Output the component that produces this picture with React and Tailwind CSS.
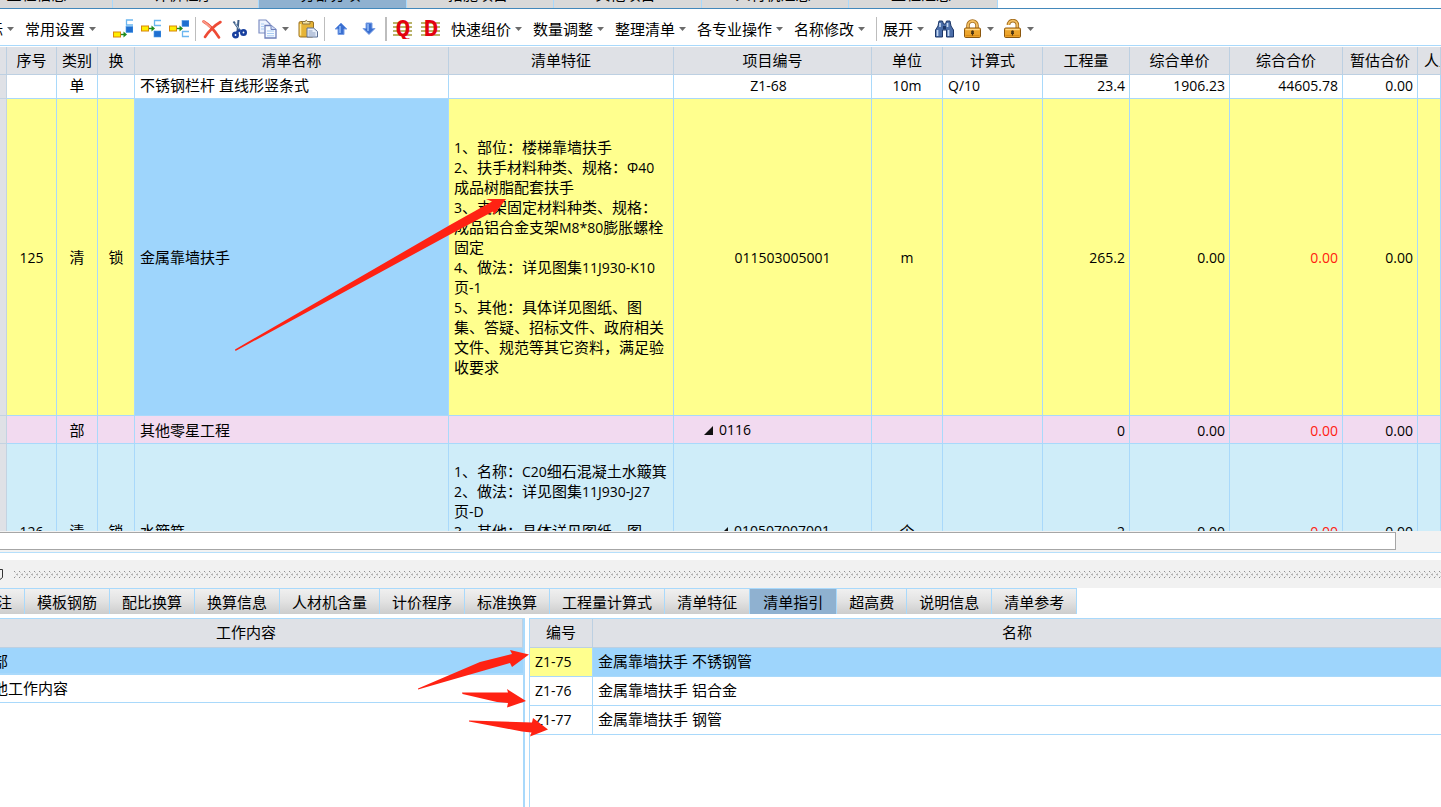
import clsx from 'clsx';

const TOP_TABS = [
  { label: '工程信息', width: 'w-[148px]' },
  { label: '计价程序', width: 'w-[146px]' },
  { label: '分部分项', width: 'w-[148px]', active: true },
  { label: '措施项目', width: 'w-[147px]' },
  { label: '其他项目', width: 'w-[148px]' },
  { label: '人材机汇总', width: 'w-[147px]' },
  { label: '工程汇总', width: 'w-[149px]' },
];

const BOTTOM_TABS = [
  '备注',
  '模板钢筋',
  '配比换算',
  '换算信息',
  '人材机含量',
  '计价程序',
  '标准换算',
  '工程量计算式',
  '清单特征',
  '清单指引',
  '超高费',
  '说明信息',
  '清单参考',
];

const COLUMNS = [
  { key: 'gutter', label: '', width: 'w-[7px]' },
  { key: 'no', label: '序号', width: 'w-[50px]', align: 'text-center' },
  { key: 'type', label: '类别', width: 'w-[41px]', align: 'text-center' },
  { key: 'lock', label: '换', width: 'w-[37px]', align: 'text-center' },
  { key: 'name', label: '清单名称', width: 'w-[314px]', align: 'text-left' },
  { key: 'feature', label: '清单特征', width: 'w-[225px]', align: 'text-left' },
  { key: 'code', label: '项目编号', width: 'w-[198px]', align: 'text-center' },
  { key: 'unit', label: '单位', width: 'w-[71px]', align: 'text-center' },
  { key: 'formula', label: '计算式', width: 'w-[100px]', align: 'text-left' },
  { key: 'qty', label: '工程量', width: 'w-[87px]', align: 'text-right' },
  { key: 'price', label: '综合单价', width: 'w-[100px]', align: 'text-right' },
  { key: 'total', label: '综合合价', width: 'w-[113px]', align: 'text-right' },
  { key: 'estimate', label: '暂估合价', width: 'w-[75px]', align: 'text-right' },
  { key: 'labor', label: '人工费', width: '', align: 'text-left' },
];

const ROWS = [
  {
    id: 'z1-68',
    height: 'h-6 align-top',
    bg: 'bg-white',
    type: '单',
    name: '不锈钢栏杆 直线形竖条式',
    code: 'Z1-68',
    indent: 'pr-2',
    unit: '10m',
    formula: 'Q/10',
    qty: '23.4',
    price: '1906.23',
    total: '44605.78',
    estimate: '0.00',
  },
  {
    id: '125',
    height: 'h-[317px]',
    bg: 'bg-[#ffff8e]',
    no: '125',
    type: '清',
    lock: '锁',
    name: '金属靠墙扶手',
    selected: true,
    feature: [
      '1、部位：楼梯靠墙扶手',
      '2、扶手材料种类、规格：Φ40',
      '成品树脂配套扶手',
      '3、支架固定材料种类、规格：',
      '成品铝合金支架M8*80膨胀螺栓',
      '固定',
      '4、做法：详见图集11J930-K10',
      '页-1',
      '5、其他：具体详见图纸、图',
      '集、答疑、招标文件、政府相关',
      '文件、规范等其它资料，满足验',
      '收要求',
    ],
    code: '011503005001',
    indent: 'pl-5',
    unit: 'm',
    qty: '265.2',
    price: '0.00',
    total: '0.00',
    warn: true,
    estimate: '0.00',
  },
  {
    id: '0116',
    height: 'h-7',
    bg: 'bg-[#f2daf0]',
    type: '部',
    name: '其他零星工程',
    code: '0116',
    indent: 'pr-[90px]',
    expanded: true,
    qty: '0',
    price: '0.00',
    total: '0.00',
    warn: true,
    estimate: '0.00',
  },
  {
    id: '126',
    height: 'h-[174px]',
    bg: 'bg-[#cfedf9]',
    no: '126',
    type: '清',
    lock: '锁',
    name: '水簸箕',
    feature: [
      '1、名称：C20细石混凝土水簸箕',
      '2、做法：详见图集11J930-J27',
      '页-D',
      '3、其他：具体详见图纸、图',
      '集、答疑、招标文件、政府相关',
      '文件、规范等其它资料，满足验',
      '收要求',
    ],
    code: '010507007001',
    indent: 'pl-1',
    expanded: true,
    unit: '个',
    qty: '2',
    price: '0.00',
    total: '0.00',
    warn: true,
    estimate: '0.00',
  },
];

const GUIDE_ROWS = [
  { code: 'Z1-75', name: '金属靠墙扶手 不锈钢管', selected: true },
  { code: 'Z1-76', name: '金属靠墙扶手 铝合金' },
  { code: 'Z1-77', name: '金属靠墙扶手 钢管' },
];

const TAB_GRADIENT = 'bg-linear-to-b from-[#f0f0f0] via-[#e2e2e2] to-[#cdcdcd]';

// Latin runs are set one size smaller than the Chinese text around them.
function Mixed({ text }) {
  return text.split(/([\x21-\x7eΦ]+)/).map((part, i) =>
    i % 2 ? (
      <span key={i} className="text-sm leading-none">
        {part}
      </span>
    ) : (
      part
    )
  );
}

function Caret() {
  return (
    <svg width="7" height="4" viewBox="0 0 7 4" className="shrink-0" aria-hidden="true">
      <path d="M0 0h7L3.5 4z" fill="#6b6b6b" />
    </svg>
  );
}

function MenuButton({ label, className }) {
  return (
    <button
      type="button"
      className={clsx('flex shrink-0 items-center gap-1 pr-[7px] pl-1 whitespace-nowrap', className)}
    >
      {label}
      <Caret />
    </button>
  );
}

function CaretButton({ label }) {
  return (
    <button type="button" aria-label={label} className="flex h-5 shrink-0 items-center pr-[5px]">
      <Caret />
    </button>
  );
}

function IconButton({ label, children }) {
  return (
    <button type="button" aria-label={label} className="mx-1 size-5 shrink-0">
      <svg width="20" height="20" viewBox="0 0 20 20" aria-hidden="true">
        {children}
      </svg>
    </button>
  );
}

function Separator({ wide = false }) {
  return <div className={clsx('mx-0.5 h-6 shrink-0 bg-[#bdbdbd]', wide ? 'w-0.5' : 'w-px')} />;
}

function YellowArrow({ y }) {
  return (
    <>
      <rect x="0.5" y={y - 2.5} width="7" height="5" fill="#ffee00" stroke="#d8860b" />
      <path d={`M8 ${y}h4`} stroke="#1c8a1c" strokeWidth="1.4" />
      <path d={`M10.5 ${y - 3}L14 ${y}l-3.500 3z`} fill="#1c8a1c" />
    </>
  );
}

function BlueBlock({ y }) {
  return <rect x="13" y={y} width="7" height="6" fill="#1f6fd0" stroke="#4d9be8" strokeWidth="0.6" />;
}

function OpenBlock({ y }) {
  return <path d={`M20 ${y + 0.5}h-6.500v5h6.500`} fill="#fff" stroke="#6bb6f0" strokeWidth="1.3" />;
}

function LockBody() {
  return (
    <>
      <rect x="1.500" y="9" width="16" height="9.500" rx="1.200" fill="#eda52c" stroke="#8a560f" />
      <path d="M2.500 10.500h14" stroke="#ffd787" strokeWidth="1.400" />
      <path d="M2.500 16.500h14" stroke="#d98b17" strokeWidth="1.200" />
      <circle cx="9.500" cy="12.700" r="1.500" fill="#4a3413" />
      <path d="M9.500 13v3.500M8 14.500h3" stroke="#4a3413" strokeWidth="1.200" />
    </>
  );
}

function LetterIcon({ letter }) {
  return (
    <>
      <path d="M0 4h19M0 8h19M0 12h19M0 16h19" stroke="#a39a3a" strokeWidth="1.300" />
      <text
        x="10"
        y="17"
        textAnchor="middle"
        fontFamily="Liberation Mono, monospace"
        fontWeight="700"
        fontSize="24"
        fill="#e3000f"
      >
        {letter}
      </text>
    </>
  );
}

function Toolbar() {
  return (
    <div className="flex h-[37px] shrink-0 items-center overflow-hidden border-b border-[#a9d9fb] bg-white pt-1">
      <MenuButton label="目标" className="-ml-[31px]" />
      <MenuButton label="常用设置" />
      <div className="w-1.5 shrink-0" />
      <IconButton label="插入前">
        <OpenBlock y={0.5} />
        <BlueBlock y={7.5} />
        <YellowArrow y={15.5} />
      </IconButton>
      <IconButton label="插入中">
        <OpenBlock y={1} />
        <BlueBlock y={12} />
        <YellowArrow y={9.5} />
      </IconButton>
      <IconButton label="插入后">
        <BlueBlock y={1.5} />
        <OpenBlock y={12} />
        <YellowArrow y={9.5} />
      </IconButton>
      <Separator />
      <IconButton label="删除">
        <path
          d="M1.500 2.500C6 5 13 12 17 18.500M18.500 3C13 6 6 13 3 18"
          fill="none"
          stroke="#ee4a35"
          strokeWidth="2.600"
          strokeLinecap="round"
        />
        <path d="M1.500 2.500C4 4 6 6 8 8" stroke="#f99a88" strokeWidth="2" strokeLinecap="round" />
      </IconButton>
      <IconButton label="剪切">
        <path d="M3.500 2.500l6.500 9M8.500 1L7.500 12" stroke="#3f5f88" strokeWidth="2" />
        <path d="M5 4l4.500 6.500" stroke="#c9dcf0" strokeWidth="0.800" />
        <circle cx="5.500" cy="16" r="2.200" fill="none" stroke="#183f9e" strokeWidth="2.600" />
        <circle cx="13.500" cy="13.500" r="2.200" fill="none" stroke="#183f9e" strokeWidth="2.600" />
        <path d="M6.500 13.500l4-2.500" stroke="#183f9e" strokeWidth="2.400" />
      </IconButton>
      <IconButton label="复制">
        <path d="M1 1h7l4 4v9H1z" fill="#eef3fd" stroke="#7f8fc4" strokeWidth="1.200" />
        <path d="M7 6.500h6l5 4v8.500H7z" fill="#f6faff" stroke="#6f80bb" strokeWidth="1.300" />
        <path d="M13 6.500v4h5" fill="#cfdcf5" stroke="#6f80bb" />
        <path d="M9 12h7M9 14.500h7M9 16.800h7M3 5h3M3 7.500h3M3 10h3" stroke="#a8cbf3" />
      </IconButton>
      <CaretButton label="复制选项" />
      <IconButton label="粘贴">
        <rect x="1" y="2.500" width="14.500" height="15.500" rx="1.500" fill="#e6b437" stroke="#9a7121" />
        <path d="M2.500 5v11.500" stroke="#ffe89a" strokeWidth="1.500" />
        <path d="M4.500 5V2.500h2.500Q8.300 0 9.500 2.500H12V5z" fill="#f2e3a4" stroke="#8d7440" />
        <path d="M9 9h6.500l4 3.500V18H9z" fill="#e8effa" stroke="#5b6f94" />
        <path d="M10.500 12h4M10.500 14h7M10.500 16h7" stroke="#8d9fc1" />
      </IconButton>
      <Separator />
      <IconButton label="上移">
        <path d="M10 4l6 6h-3v5.500H7V10H4z" fill="#3a6fd0" stroke="#7ba0e6" />
        <path d="M9 7v7" stroke="#94bdf8" strokeWidth="1.500" />
      </IconButton>
      <IconButton label="下移">
        <path d="M10 15.500l-6-6h3V4h6v5.500h3z" fill="#3a6fd0" stroke="#7ba0e6" />
        <path d="M9 5v7" stroke="#94bdf8" strokeWidth="1.500" />
      </IconButton>
      <Separator wide />
      <IconButton label="清单库">
        <LetterIcon letter="Q" />
      </IconButton>
      <IconButton label="定额库">
        <LetterIcon letter="D" />
      </IconButton>
      <div className="flex shrink-0 px-0.5">
        <MenuButton label="快速组价" />
        <MenuButton label="数量调整" />
        <MenuButton label="整理清单" />
        <MenuButton label="各专业操作" />
        <MenuButton label="名称修改" />
      </div>
      <Separator />
      <MenuButton label="展开" />
      <IconButton label="查找">
        <path
          d="M4 2h3.500l1 3h2l1-3H15l1 5 2.500 4v7h-7v-7h-4v7h-7v-7L3 7z"
          fill="#4b6ea9"
          stroke="#1d3768"
        />
        <path d="M2.500 11v6M13.500 11v6M5 4v4M12.500 4v4" stroke="#c5d9f3" strokeWidth="1.700" />
        <path d="M8 7h3v3H8z" fill="#1d3768" />
      </IconButton>
      <IconButton label="锁定">
        <path d="M5 10V6.500a4.500 4.500 0 0 1 9 0V10" fill="none" stroke="#a8701f" strokeWidth="3.600" />
        <path d="M5 10V6.500a4.500 4.500 0 0 1 9 0V10" fill="none" stroke="#f3c064" strokeWidth="1.800" />
        <LockBody />
      </IconButton>
      <CaretButton label="锁定选项" />
      <IconButton label="解锁">
        <path d="M5.500 6a4.300 4.300 0 0 1 8.800 0V10" fill="none" stroke="#a8701f" strokeWidth="3.600" />
        <path d="M5.500 6a4.300 4.300 0 0 1 8.800 0V10" fill="none" stroke="#f3c064" strokeWidth="1.800" />
        <LockBody />
      </IconButton>
      <CaretButton label="解锁选项" />
    </div>
  );
}

function Cell({ col, row }) {
  if (col.key === 'gutter') {
    return <td className="border-r border-b border-[#c3d3e2] bg-[#dfe1e6] p-0" />;
  }
  const value = row[col.key];
  return (
    <td
      className={clsx(
        'overflow-hidden border-r border-b border-[#a9d9fb] py-0 whitespace-nowrap',
        col.align,
        col.align === 'text-left' && 'pl-[5px]',
        col.align === 'text-right' && 'pr-1',
        col.key === 'code' && row.indent,
        row.selected && col.key === 'name' ? 'bg-[#9ed5fc]' : row.bg,
        row.warn && col.key === 'total' && 'text-[#ff2010]'
      )}
    >
      {col.key === 'feature' && value ? (
        value.map((line) => (
          <div key={line}>
            <Mixed text={line} />
          </div>
        ))
      ) : col.key === 'code' && row.expanded ? (
        <button type="button" className="inline-flex items-center gap-1.5">
          <svg width="9" height="9" viewBox="0 0 9 9" aria-hidden="true">
            <path d="M9 0v9H0z" fill="#111" />
          </svg>
          <span className="text-sm leading-5">{value}</span>
        </button>
      ) : (
        value && <Mixed text={value} />
      )}
    </td>
  );
}

function BillTable() {
  return (
    <div className="min-h-0 flex-1 overflow-hidden pt-px">
      <table className="w-full table-fixed border-separate border-spacing-0 leading-5">
        <thead>
          <tr className="h-7">
            {COLUMNS.map((col) => (
              <th
                key={col.key}
                className={clsx(
                  'overflow-hidden border-r border-b border-[#bdd0e2] bg-[#dfe1e6] px-0 pt-0 pb-0.5 font-normal whitespace-nowrap',
                  col.width,
                  !col.width && 'pl-[6px] text-left'
                )}
              >
                {col.label}
              </th>
            ))}
          </tr>
        </thead>
        <tbody>
          {ROWS.map((row) => (
            <tr key={row.id} className={row.height}>
              {COLUMNS.map((col) => (
                <Cell key={col.key} col={col} row={row} />
              ))}
            </tr>
          ))}
        </tbody>
      </table>
    </div>
  );
}

function Splitter() {
  return (
    <div className="flex h-7 shrink-0 items-center gap-[11px] bg-[#f1f1f1]">
      <svg width="3" height="11" viewBox="0 0 3 11" aria-hidden="true">
        <path d="M0 .5h2.500v8L0 10.500" fill="none" stroke="#333" />
      </svg>
      <svg width="100%" height="7" className="min-w-0 flex-1" aria-hidden="true">
        <defs>
          <pattern id="grip" width="5" height="7" patternUnits="userSpaceOnUse">
            <rect width="1" height="1" fill="#8f8f8f" />
            <rect x="1" y="1" width="1" height="1" fill="#d0d0d0" />
            <rect x="2" y="3" width="2" height="1" fill="#b0b0b0" />
            <rect x="3" y="2" width="1" height="1" fill="#d0d0d0" />
            <rect x="3" y="4" width="1" height="1" fill="#d0d0d0" />
            <rect y="6" width="1" height="1" fill="#8f8f8f" />
            <rect x="1" y="5" width="1" height="1" fill="#d0d0d0" />
          </pattern>
        </defs>
        <rect width="100%" height="7" fill="url(#grip)" />
      </svg>
    </div>
  );
}

function DetailPanel() {
  return (
    <div className="flex min-h-0 flex-1">
      <div className="w-[525px] shrink-0 overflow-hidden border-t border-r-2 border-[#a9d9fb]">
        <div className="-ml-[30px]">
          <table className="w-full border-separate border-spacing-0 leading-5">
            <thead>
              <tr className="h-[29px]">
                <th className="border-r border-b border-[#bdd0e2] bg-[#dfe1e6] px-0 pt-0 pb-0.5 font-normal">
                  工作内容
                </th>
              </tr>
            </thead>
            <tbody>
              <tr className="h-[27px]">
                <td className="border-b-2 border-[#a9d9fb] bg-[#9ed5fc] py-0 pl-2">全部</td>
              </tr>
              <tr className="h-7">
                <td className="border-b border-[#a9d9fb] pt-0 pb-0.5 pl-2">其他工作内容</td>
              </tr>
            </tbody>
          </table>
        </div>
      </div>
      <div className="ml-1 min-w-0 flex-1 border-t border-l border-[#a9d9fb]">
        <table className="w-full table-fixed border-separate border-spacing-0 leading-5">
          <thead>
            <tr className="h-[29px]">
              <th className="w-[63px] border-r border-b border-[#bdd0e2] bg-[#dfe1e6] px-0 pt-0 pb-0.5 font-normal">
                编号
              </th>
              <th className="border-b border-[#bdd0e2] bg-[#dfe1e6] px-0 pt-0 pb-0.5 font-normal">
                名称
              </th>
            </tr>
          </thead>
          <tbody>
            {GUIDE_ROWS.map((row) => (
              <tr key={row.code} className="h-[29px]">
                <td
                  className={clsx(
                    'border-r border-b border-[#a9d9fb] pt-0 pr-0 pb-0.5 pl-[5px]',
                    row.selected && 'bg-[#ffff8e]'
                  )}
                >
                  <Mixed text={row.code} />
                </td>
                <td
                  className={clsx(
                    'border-b border-[#a9d9fb] pt-0 pb-0.5 pl-[5px]',
                    row.selected && 'bg-[#9ed5fc]'
                  )}
                >
                  {row.name}
                </td>
              </tr>
            ))}
          </tbody>
        </table>
      </div>
    </div>
  );
}

// Red arrows drawn on top of the window.
function Annotations() {
  return (
    <svg className="pointer-events-none absolute top-0 left-0 size-full" fill="#ff2213" aria-hidden="true">
      <path d="M235 349.500L450 225l42-23.500-6-2.500h20l-12 16-1-3.500-43 23L235.500 351z" />
      <path d="M418 688.500L480 662l32-8-2-4 19 4.500-17 12.500-2-4-26 7.500-66 19z" />
      <path d="M462 692.500h46l-1-3.500 19 12-19 6.500 1-4.500-11-1-34.500-8z" />
      <path d="M469 720.500l63 2 1-4.500 15 11.500-18 7 1.500-4-9.500-1-53-10z" />
    </svg>
  );
}

export default function App() {
  return (
    <div className="relative flex h-screen flex-col overflow-hidden bg-white font-['Open_Sans','Noto_Sans_CJK_SC',sans-serif] text-[15px] leading-5 text-black">
      <div className="flex h-[9px] shrink-0 items-end overflow-hidden border-b border-[#4388bb] pr-4">
        {TOP_TABS.map((tab, i) => (
          <button
            key={tab.label}
            type="button"
            className={clsx(
              'h-6 shrink-0 border-r border-[#a9d9fb] pr-1 pb-1',
              tab.width,
              i === 0 && '-ml-[35px]',
              tab.active ? 'bg-[#8fb1d0]' : 'bg-[#d9d9d9]'
            )}
          >
            {tab.label}
          </button>
        ))}
      </div>
      <Toolbar />
      <BillTable />
      <div className="flex h-[22px] shrink-0 items-start border-b border-[#b5dffb] bg-[#f2f2f2] pt-px">
        <div className="mr-[45px] h-[18px] flex-1 border border-l-0 border-[#a6a6a6] bg-white" />
      </div>
      <div className="flex h-[254px] shrink-0 flex-col pt-[7px]">
        <Splitter />
        <div className="mb-1 flex h-[26px] shrink-0 items-stretch">
          {BOTTOM_TABS.map((label, i) => {
            const active = label === '清单指引';
            return (
              <button
                key={label}
                type="button"
                className={clsx(
                  'shrink-0 border-t border-r border-[#a9d9fb] whitespace-nowrap',
                  i === 0 && '-ml-[30px]',
                  active ? 'bg-[#8fb1d0] px-[13px]' : `px-3 ${TAB_GRADIENT}`
                )}
              >
                {label}
              </button>
            );
          })}
        </div>
        <DetailPanel />
      </div>
      <Annotations />
    </div>
  );
}
